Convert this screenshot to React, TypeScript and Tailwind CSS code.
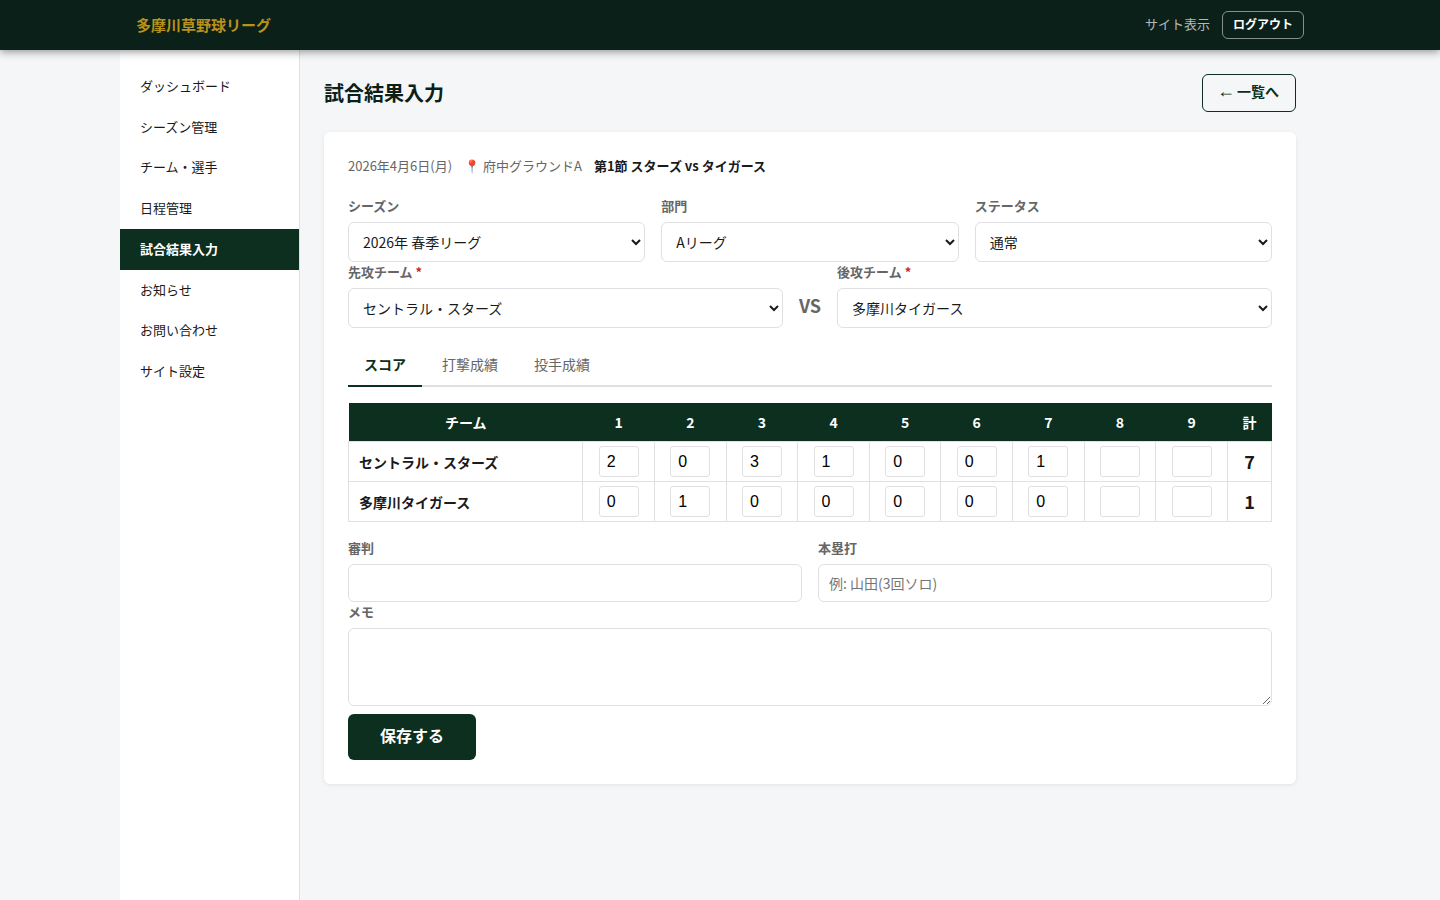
import { ReactNode } from "react";

const NAV = [
  "ダッシュボード",
  "シーズン管理",
  "チーム・選手",
  "日程管理",
  "試合結果入力",
  "お知らせ",
  "お問い合わせ",
  "サイト設定",
];

const TABS = ["スコア", "打撃成績", "投手成績"];
const INNINGS = [1, 2, 3, 4, 5, 6, 7, 8, 9];

const SCORES = [
  { team: "セントラル・スターズ", runs: ["2", "0", "3", "1", "0", "0", "1", "", ""], total: 7 },
  { team: "多摩川タイガース", runs: ["0", "1", "0", "0", "0", "0", "0", "", ""], total: 1 },
];

function Field({ label, required, className, children }: { label: string; required?: boolean; className?: string; children: ReactNode }) {
  return (
    <div className={className}>
      <label className="block h-[21px] mb-[5px] text-[13px] leading-[19px] font-bold text-[#666]">
        {label}
        {required && <span className="text-[#c62828]"> *</span>}
      </label>
      {children}
    </div>
  );
}

function Select({ value }: { value: string }) {
  return (
    <select className="block w-full h-10 px-2.5 pb-px text-sm text-[#1a1a1a] bg-white border border-[#e0e0e4] rounded-md" defaultValue={value}>
      <option value={value}>{value}</option>
    </select>
  );
}

export default function App() {
  return (
    <div className="min-h-screen flex flex-col bg-[#f4f6f8] text-[#1a1a1a] font-['Noto_Sans_CJK_JP',sans-serif] leading-[1.6]">
      <header className="relative z-10 h-[50px] bg-[#0b2019] shadow-[0_2px_8px_rgba(0,0,0,0.4)]">
        <div className="max-w-[1200px] h-full mx-auto px-4 flex items-center justify-between">
          <span className="text-[15px] font-bold text-[#b8921a]">多摩川草野球リーグ</span>
          <div className="flex items-center gap-3">
            <a className="pb-px text-[13px] text-white/70">サイト表示</a>
            <button className="h-7 px-2.5 pb-0.5 text-xs font-bold text-white border border-white/50 rounded-md">ログアウト</button>
          </div>
        </div>
      </header>

      <div className="flex-1 w-[1200px] mx-auto flex">
        <aside className="w-[180px] shrink-0 py-4 bg-white border-r border-[#e0e0e4]">
          {NAV.map((item) => (
            <a
              key={item}
              className={
                item === "試合結果入力"
                  ? "block px-5 pt-[9.8px] pb-[10.2px] text-[13px] leading-[20.8px] font-bold text-white bg-[#0c2f20]"
                  : "block px-5 pt-[9.8px] pb-[10.2px] text-[13px] leading-[20.8px]"
              }
            >
              {item}
            </a>
          ))}
        </aside>

        <main className="flex-1 p-6">
          <div className="flex items-center justify-between mb-5">
            <h1 className="text-xl font-bold text-[#0b2019] leading-8">試合結果入力</h1>
            <button className="h-[38px] px-4 pb-1 flex items-center text-sm font-bold text-[#0c2f20] border border-[#0c2f20] rounded-md">
              <span className="-ml-[2px] mr-[2px] font-['Liberation_Sans',sans-serif] text-lg leading-none font-normal">←</span>
              一覧へ
            </button>
          </div>

          <section className="p-6 bg-white rounded-md shadow-[0_1px_4px_rgba(0,0,0,0.08)]">
            <div className="h-5 mb-5 flex gap-3 text-[13px] leading-[20px] text-[#666]">
              <span>2026年4月6日(月)</span>
              <span>📍 府中グラウンドA</span>
              <strong className="font-bold text-[#1a1a1a]">第1節 スターズ vs タイガース</strong>
            </div>

            <div className="grid grid-cols-3 gap-4">
              <Field label="シーズン"><Select value="2026年 春季リーグ" /></Field>
              <Field label="部門"><Select value="Aリーグ" /></Field>
              <Field label="ステータス"><Select value="通常" /></Field>
            </div>

            <div className="flex items-end gap-4 mb-4">
              <Field label="先攻チーム" required className="flex-1"><Select value="セントラル・スターズ" /></Field>
              <span className="pb-2 text-lg leading-[28.8px] font-bold text-[#666]">VS</span>
              <Field label="後攻チーム" required className="flex-1"><Select value="多摩川タイガース" /></Field>
            </div>

            <div className="h-[43px] mb-4 flex gap-1 border-b-2 border-[#e0e0e4]">
              {TABS.map((tab, i) => (
                <button
                  key={tab}
                  className={
                    i === 0
                      ? "h-[43px] px-4 pb-0.5 text-sm font-bold text-[#0c2f20] border-b-2 border-[#0c2f20]"
                      : "h-[43px] px-4 pb-0.5 text-sm text-[#666] border-b-2 border-transparent"
                  }
                >
                  {tab}
                </button>
              ))}
            </div>

            <table className="w-full table-fixed border-collapse text-sm">
              <colgroup>
                <col className="w-[234.4px]" />
                {INNINGS.map((n) => <col key={n} />)}
                <col className="w-[44px]" />
              </colgroup>
              <thead>
                <tr className="h-[38px] bg-[#0c2f20] text-white">
                  <th className="font-bold">チーム</th>
                  {INNINGS.map((n) => <th key={n} className="font-bold">{n}</th>)}
                  <th className="font-bold">計</th>
                </tr>
              </thead>
              <tbody>
                {SCORES.map((row) => (
                  <tr key={row.team} className="h-10">
                    <td className="px-2.5 pt-px border border-[#e0e0e4] font-bold">{row.team}</td>
                    {row.runs.map((run, i) => (
                      <td key={i} className="border border-[#e0e0e4]">
                        <input
                          className="block w-10 h-[31px] mx-auto px-[7px] pt-0.5 font-['Liberation_Sans',sans-serif] text-base text-black border border-[#e0e0e4] rounded-[3px]"
                          defaultValue={run}
                        />
                      </td>
                    ))}
                    <td className="border border-[#e0e0e4] text-center text-lg leading-none font-bold">{row.total}</td>
                  </tr>
                ))}
              </tbody>
            </table>

            <div className="mt-4 grid grid-cols-2 gap-4">
              <Field label="審判">
                <input className="block w-full h-[38px] px-2.5 text-sm border border-[#e0e0e4] rounded-md" />
              </Field>
              <Field label="本塁打">
                <input
                  className="block w-full h-[38px] px-2.5 text-sm border border-[#e0e0e4] rounded-md placeholder:text-[#757575]"
                  placeholder="例: 山田(3回ソロ)"
                />
              </Field>
            </div>
            <Field label="メモ">
              <textarea className="block w-full h-[78px] px-2.5 py-2 text-sm border border-[#e0e0e4] rounded-md" />
            </Field>
            <button className="mt-2 block h-[46px] px-8 pb-[4px] text-base font-bold text-white bg-[#0c2f20] rounded-md">保存する</button>
          </section>
        </main>
      </div>
    </div>
  );
}
